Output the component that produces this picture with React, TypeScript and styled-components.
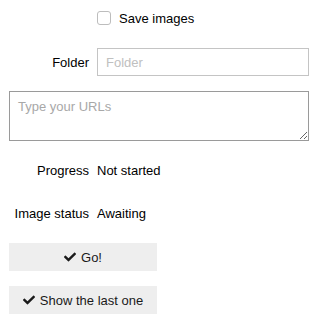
import React from "react";
import styled, { createGlobalStyle } from "styled-components";
import { FaCheck } from "react-icons/fa";

const GlobalStyle = createGlobalStyle`
  body {
    margin: 0;
    font-family: "Liberation Sans", Arial, sans-serif;
    font-size: 13px;
    color: #000;
    background: #fff;
  }
`;

const Page = styled.div`
  display: flex;
  flex-direction: column;
  width: 300px;
  padding: 0 9px;
`;

const Row = styled.div<{ $top: number }>`
  display: grid;
  grid-template-columns: 80px 1fr;
  column-gap: 8px;
  align-items: center;
  min-height: 20px;
  margin-top: ${(p) => p.$top}px;
`;

const Label = styled.label`
  text-align: right;
  white-space: nowrap;
`;

const CheckLabel = styled.label`
  grid-column: 2;
  display: flex;
  align-items: center;
  gap: 8px;
`;

const Checkbox = styled.input`
  appearance: none;
  margin: 0;
  width: 14px;
  height: 14px;
  border: 1px solid #bdbdbd;
  border-radius: 3px;
  background: #fff;
`;

const TextInput = styled.input`
  box-sizing: border-box;
  height: 28px;
  width: 100%;
  border: 1px solid #c4c4c4;
  padding: 0 8px;
  font: inherit;
  outline: none;
  &::placeholder {
    color: #c0c0c0;
  }
`;

const Urls = styled.textarea`
  box-sizing: border-box;
  display: block;
  width: 300px;
  height: 50px;
  margin-top: 15px;
  border: 1px solid #9a9a9a;
  padding: 7px 8px;
  font: inherit;
  outline: none;
  &::placeholder {
    color: #a8a8a8;
  }
`;

const Button = styled.button<{ $top: number }>`
  display: flex;
  align-items: center;
  justify-content: center;
  gap: 5px;
  width: 148px;
  height: 28px;
  margin-top: ${(p) => p.$top}px;
  border: none;
  background: #eeeeee;
  color: #1a1a1a;
  font: inherit;
  padding: 0;
`;

export default function App() {
  return (
    <Page>
      <GlobalStyle />
      <Row $top={8}>
        <CheckLabel>
          <Checkbox type="checkbox" />
          Save images
        </CheckLabel>
      </Row>
      <Row $top={20}>
        <Label>Folder</Label>
        <TextInput placeholder="Folder" />
      </Row>
      <Urls placeholder="Type your URLs" />
      <Row $top={19}>
        <Label>Progress</Label>
        <span>Not started</span>
      </Row>
      <Row $top={23}>
        <Label>Image status</Label>
        <span>Awaiting</span>
      </Row>
      <Button $top={20}>
        <FaCheck size={12} />
        Go!
      </Button>
      <Button $top={15}>
        <FaCheck size={12} />
        Show the last one
      </Button>
    </Page>
  );
}
